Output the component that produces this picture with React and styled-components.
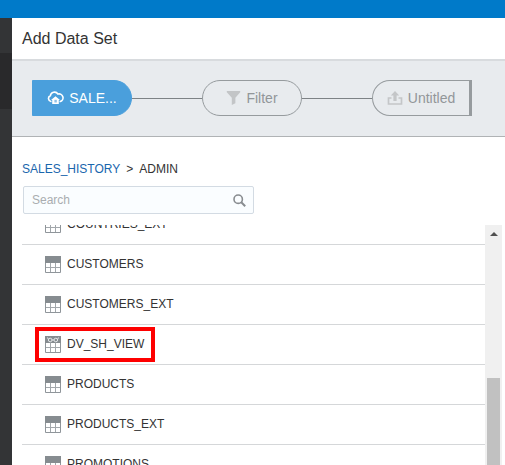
import React from "react";
import styled, { createGlobalStyle, css } from "styled-components";

const GlobalStyle = createGlobalStyle`
  *, *::before, *::after { box-sizing: border-box; }
  body {
    margin: 0;
    background: #fff;
    color: #333;
    font-family: "Liberation Sans", Arial, sans-serif;
    font-size: 12px;
    overflow: hidden;
  }
  button, input { font: inherit; }
`;

const Page = styled.div`
  display: flex;
  flex-direction: column;
  height: 100vh;
`;

const TopBar = styled.header`
  flex: none;
  height: 18px;
  background: #007ac9;
`;

const Body = styled.div`
  display: flex;
  flex: 1;
  min-height: 0;
`;

const Rail = styled.nav`
  flex: none;
  width: 12px;
  padding-top: 35px;
  background: #333436;
`;

const RailItem = styled.div`
  height: 56px;
  background: #29292b;
`;

const Dialog = styled.main`
  display: flex;
  flex: 1;
  flex-direction: column;
  min-width: 0;
`;

const Title = styled.h1`
  flex: none;
  height: 43px;
  margin: 0;
  padding: 0 10px;
  border-bottom: 2px solid #d8dbde;
  font-size: 16px;
  font-weight: 400;
  line-height: 41px;
`;

const Steps = styled.div`
  display: flex;
  flex: none;
  align-items: center;
  height: 76px;
  padding: 0 33px 2px 20px;
  border-bottom: 1px solid #b0b3b5;
  background: #e8ebee;
`;

const Connector = styled.div`
  flex: 1;
  height: 1px;
  margin-top: 2px;
  background: #7d8285;
`;

const stepKinds = {
  start: css`
    border: 1px solid #4a9fdc;
    border-radius: 0 18px 18px 0;
    background: #4a9fdc;
    color: #fff;
  `,
  middle: css`
    border: 1px solid #969b9e;
    border-radius: 18px;
    background: transparent;
    color: #929699;
  `,
  end: css`
    border: 1px solid #969b9e;
    border-right-width: 3px;
    border-radius: 18px 0 0 18px;
    background: transparent;
    color: #929699;
  `,
};

const Step = styled.button`
  display: flex;
  flex: none;
  align-items: center;
  justify-content: center;
  gap: 5px;
  width: 100px;
  height: 36px;
  padding: 0;
  font-size: 14px;
  ${({ $kind }) => stepKinds[$kind]}

  svg { flex: none; }
`;

const Breadcrumb = styled.nav`
  display: flex;
  flex: none;
  gap: 6px;
  padding: 24px 10px 0;
  line-height: 16px;
`;

const CrumbLink = styled.a`
  color: #1a66ad;
  text-decoration: none;
`;

const SearchBox = styled.label`
  display: flex;
  flex: none;
  align-items: center;
  width: 231px;
  height: 28px;
  margin: 9px 11px 11px;
  padding: 0 7px 0 8px;
  border: 1px solid #d3dbe3;
  border-radius: 2px;
  background: #fafdff;
`;

const SearchInput = styled.input`
  flex: 1;
  min-width: 0;
  padding: 0;
  border: 0;
  outline: 0;
  background: transparent;
  color: #333;

  &::placeholder { color: #a9adb0; opacity: 1; }
`;

const ListArea = styled.section`
  display: flex;
  flex: 1;
  min-height: 0;
  padding: 0 3px 0 10px;
`;

const List = styled.ul`
  flex: 1;
  min-width: 0;
  margin: 0;
  padding: 0;
  overflow: hidden;
  list-style: none;
`;

const Row = styled.li`
  display: flex;
  align-items: center;
  height: 40px;
  padding-left: 23px;
  border-bottom: 1px solid #d5d7d9;

  &:first-child { margin-top: -20px; }
`;

const RowContent = styled.div`
  position: relative;
  display: flex;
  align-items: center;
  gap: 6px;
  line-height: 17px;

  svg { flex: none; }
`;

const Highlight = styled.span`
  position: absolute;
  inset: -9px -11px -9px -10px;
  border: 4px solid #fe0000;
`;

const ScrollTrack = styled.div`
  display: flex;
  flex: none;
  flex-direction: column;
  align-items: center;
  width: 17px;
  background: #f0f0f0;
`;

const ScrollUp = styled.button`
  display: flex;
  flex: none;
  align-items: center;
  justify-content: center;
  width: 17px;
  height: 17px;
  margin-bottom: 136px;
  padding: 0;
  border: 0;
  background: transparent;
`;

const ScrollThumb = styled.div`
  flex: 1;
  width: 13px;
  background: #c1c1c1;
`;

function CloudIcon() {
  return (
    <svg width="17" height="14" viewBox="0 0 17 14" aria-hidden="true">
      <path d="M4.5 10.5H4A3 3 0 0 1 3.3 4.8A4.2 4.2 0 0 1 11 3.1A3.6 3.6 0 0 1 13.3 10.5H12.5" fill="none" stroke="#fff" strokeWidth="1.6" />
      <path d="M8.5 5.3L13 9H11.8V13H5.2V9H4Z" fill="#fff" />
      <path d="M7.4 8.8H9.8V11.5H7.4Z" fill="#8ec1e8" />
    </svg>
  );
}

function FunnelIcon() {
  return (
    <svg width="15" height="14" viewBox="0 0 15 14" aria-hidden="true">
      <path d="M.8 0H14.2V1.3L9.4 6.8V12.2L5.8 14V6.8L.8 1.3Z" fill="#c3c5c7" />
    </svg>
  );
}

function ExportIcon() {
  return (
    <svg width="16" height="14" viewBox="0 0 16 14" aria-hidden="true">
      <path d="M4.5 7H1.5V13H14.5V7H11.5" fill="none" stroke="#c4c6c8" strokeWidth="1.7" />
      <path d="M8 0L12.2 4.6H9.6V10H6.4V4.6H3.8Z" fill="#c4c6c8" />
    </svg>
  );
}

function SearchIcon() {
  return (
    <svg width="13" height="13" viewBox="0 0 13 13" aria-hidden="true">
      <circle cx="5.2" cy="5.2" r="4.2" fill="none" stroke="#888c90" strokeWidth="1.6" />
      <path d="M8.3 8.3L12.2 12.2" stroke="#888c90" strokeWidth="2" />
    </svg>
  );
}

function TableIcon({ view }) {
  return (
    <svg width="16" height="17" viewBox="0 0 16 17" aria-hidden="true">
      <path d="M.5 .5H15.5V16.5H.5Z" fill="#fff" stroke="#8f959a" />
      <path d="M0 0H16V7H0Z" fill="#868c90" />
      <path d="M5.5 7V16M10.5 7V16M1 11.5H15" stroke="#a2a7ab" />
      {view && (
        <g fill="none" stroke="#e5e8ea">
          <circle cx="5.2" cy="4" r="1.8" />
          <circle cx="10.8" cy="4" r="1.8" />
          <path d="M7 4H9M3.4 3.5L2.5 1.5M12.6 3.5L13.5 1.5" />
        </g>
      )}
    </svg>
  );
}

const tables = [
  { name: "COUNTRIES_EXT" },
  { name: "CUSTOMERS" },
  { name: "CUSTOMERS_EXT" },
  { name: "DV_SH_VIEW", view: true, highlighted: true },
  { name: "PRODUCTS" },
  { name: "PRODUCTS_EXT" },
  { name: "PROMOTIONS" },
];

export default function App() {
  return (
    <Page>
      <GlobalStyle />
      <TopBar />
      <Body>
        <Rail>
          <RailItem />
        </Rail>
        <Dialog>
          <Title>Add Data Set</Title>
          <Steps>
            <Step type="button" $kind="start"><CloudIcon />SALE...</Step>
            <Connector />
            <Step type="button" $kind="middle"><FunnelIcon />Filter</Step>
            <Connector />
            <Step type="button" $kind="end"><ExportIcon />Untitled</Step>
          </Steps>
          <Breadcrumb aria-label="Breadcrumb">
            <CrumbLink href="#sales-history">SALES_HISTORY</CrumbLink>
            <span>&gt;</span>
            <span>ADMIN</span>
          </Breadcrumb>
          <SearchBox>
            <SearchInput type="text" placeholder="Search" aria-label="Search" />
            <SearchIcon />
          </SearchBox>
          <ListArea>
            <List>
              {tables.map(({ name, view, highlighted }) => (
                <Row key={name}>
                  <RowContent>
                    <TableIcon view={view} />
                    <span>{name}</span>
                    {highlighted && <Highlight />}
                  </RowContent>
                </Row>
              ))}
            </List>
            <ScrollTrack>
              <ScrollUp type="button" aria-label="Scroll up">
                <svg width="8" height="4" viewBox="0 0 8 4" aria-hidden="true">
                  <path d="M4 0L8 4H0Z" fill="#505050" />
                </svg>
              </ScrollUp>
              <ScrollThumb />
            </ScrollTrack>
          </ListArea>
        </Dialog>
      </Body>
    </Page>
  );
}
